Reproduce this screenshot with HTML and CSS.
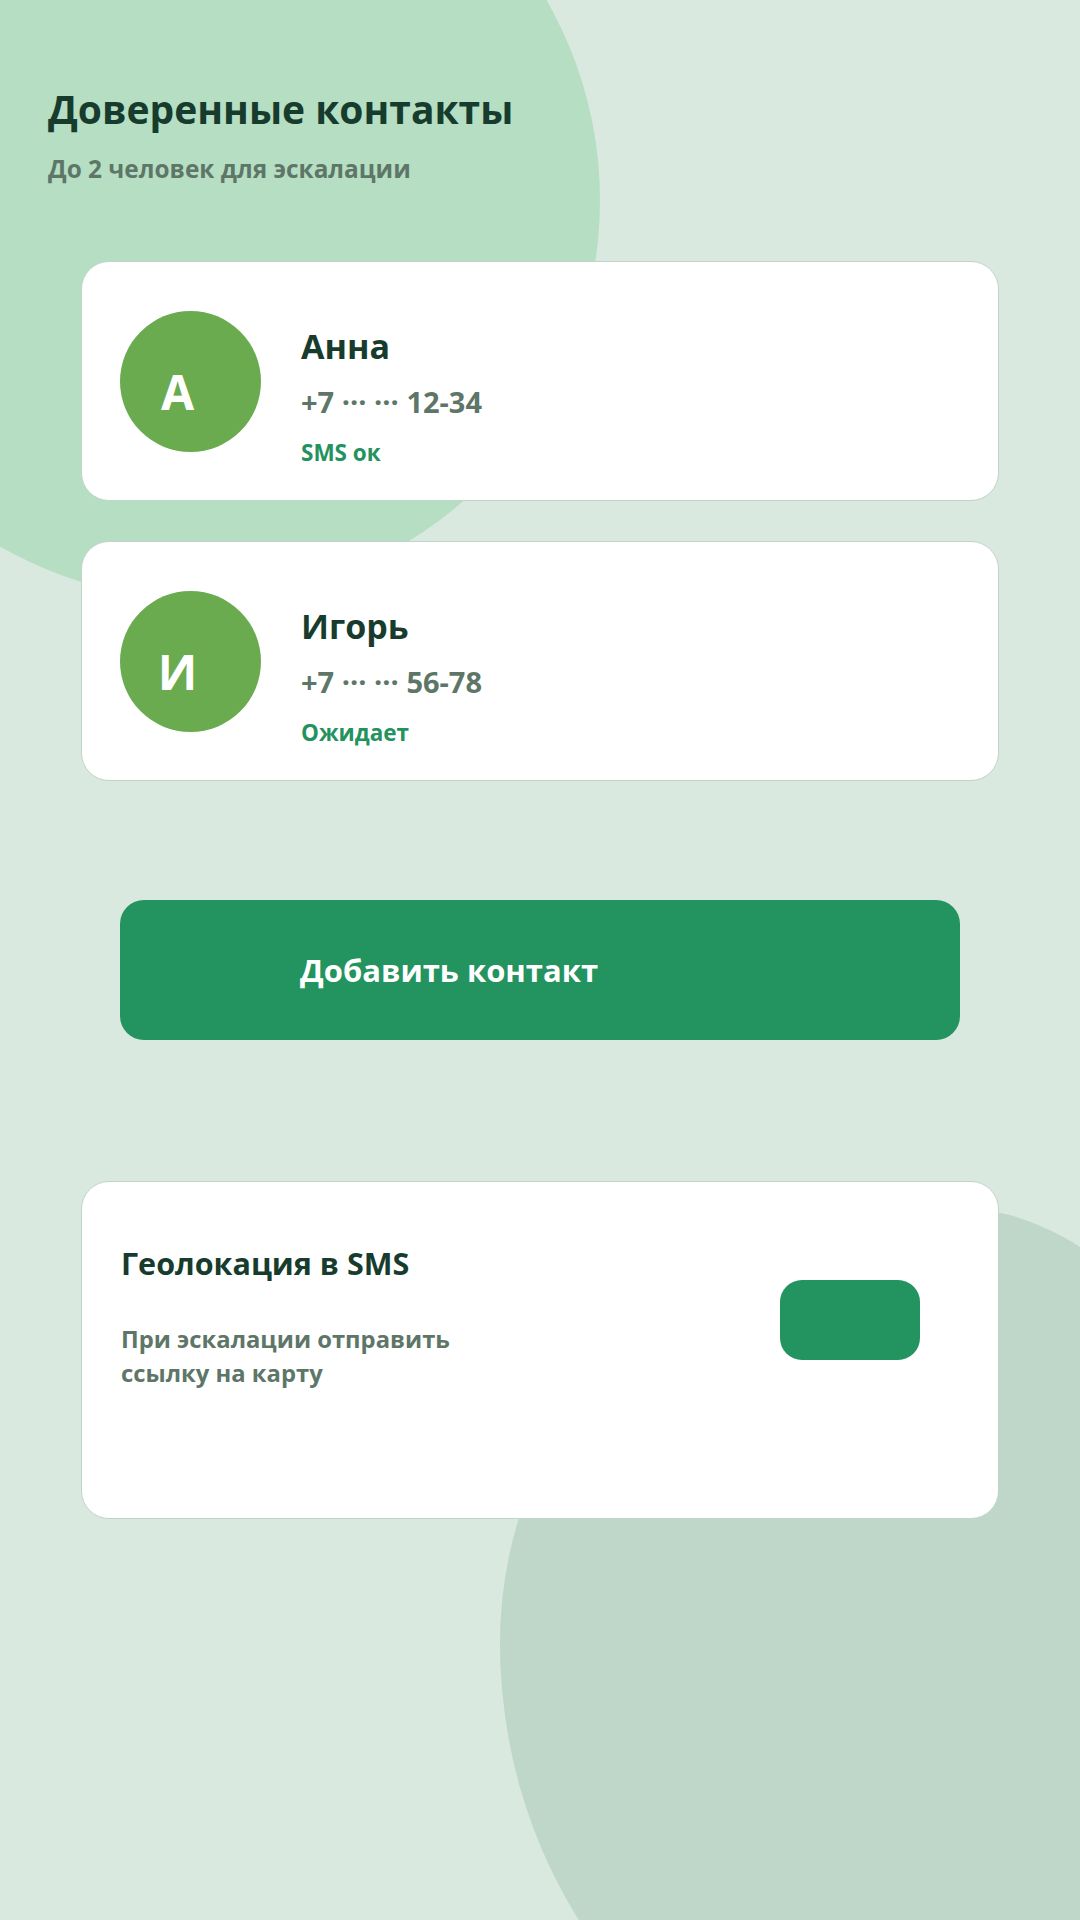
FILE: index.html
```html
<!DOCTYPE html>
<html lang="ru">
<head>
<meta charset="utf-8">
<title>Доверенные контакты</title>
<link rel="stylesheet" href="styles.css">
</head>
<body>
<div class="screen">
  <div class="blob blob-top"></div>
  <div class="blob blob-bottom"></div>
  <main class="content">
    <header class="header">
      <h1 class="title">Доверенные контакты</h1>
      <p class="subtitle">До 2 человек для эскалации</p>
    </header>
    <section class="contacts">
      <div class="card contact">
        <div class="avatar">А</div>
        <div class="info">
          <div class="name">Анна</div>
          <div class="phone">+7 ··· ··· 12-34</div>
          <div class="status">SMS ок</div>
        </div>
      </div>
      <div class="card contact">
        <div class="avatar">И</div>
        <div class="info">
          <div class="name">Игорь</div>
          <div class="phone">+7 ··· ··· 56-78</div>
          <div class="status">Ожидает</div>
        </div>
      </div>
    </section>
    <button class="add-btn" type="button">Добавить контакт</button>
    <section class="card geo">
      <div class="geo-text">
        <div class="geo-title">Геолокация в SMS</div>
        <div class="geo-desc">При эскалации отправить ссылку на карту</div>
      </div>
      <div class="toggle"></div>
    </section>
  </main>
</div>
</body>
</html>
```

FILE: styles.css
```css
html, body {
  margin: 0;
  padding: 0;
}
body {
  width: 1080px;
  height: 1920px;
  overflow: hidden;
  background: #d9e9df;
  font-family: "Open Sans", "Noto Sans", "DejaVu Sans", sans-serif;
}
.screen {
  position: relative;
  width: 1080px;
  height: 1920px;
  overflow: hidden;
}
.blob {
  position: absolute;
}
.blob-top {
  left: -200px;
  top: -200px;
  width: 800px;
  height: 800px;
  border-radius: 50%;
  background: #b5dec3;
}
.blob-bottom {
  left: 500px;
  top: 1207px;
  width: 750px;
  height: 926px;
  border-radius: 450px 300px 300px 450px / 436px 405px 521px 490px;
  background: #bed7c9;
}
.content {
  position: relative;
  z-index: 1;
  display: flex;
  flex-direction: column;
}
.header {
  padding: 81px 48px 0;
}
.title {
  margin: 0;
  font-size: 39px;
  line-height: 56px;
  font-weight: 700;
  color: #173c2d;
}
.subtitle {
  margin: 16px 0 0;
  font-size: 24.4px;
  line-height: 32px;
  font-weight: 700;
  color: #5e7668;
}
.contacts {
  margin-top: 76px;
  display: flex;
  flex-direction: column;
  align-items: center;
  gap: 40px;
}
.card {
  box-sizing: border-box;
  width: 918px;
  background: #ffffff;
  border: 1px solid #c0d4c8;
  border-radius: 28px;
}
.contact {
  height: 240px;
  padding: 49px 38px;
  display: flex;
  align-items: flex-start;
  gap: 40px;
}
.avatar {
  box-sizing: border-box;
  flex: none;
  width: 141px;
  height: 141px;
  border-radius: 50%;
  background: #6aab50;
  color: #ffffff;
  font-size: 48px;
  font-weight: 700;
  display: flex;
  align-items: center;
  justify-content: center;
  padding: 20px 26px 0 0;
}
.info {
  margin-top: 11px;
  display: flex;
  flex-direction: column;
}
.name {
  font-size: 34px;
  line-height: 48px;
  font-weight: 700;
  color: #173c2d;
}
.phone {
  margin-top: 12px;
  font-size: 29px;
  line-height: 40px;
  font-weight: 700;
  color: #5e7668;
}
.status {
  margin-top: 16px;
  font-size: 22.5px;
  line-height: 30px;
  font-weight: 700;
  color: #23925f;
}
.add-btn {
  align-self: center;
  margin-top: 119px;
  width: 840px;
  height: 140px;
  border: none;
  border-radius: 24px;
  background: #23935f;
  color: #ffffff;
  font-family: "Open Sans", "Noto Sans", "DejaVu Sans", sans-serif;
  font-size: 31px;
  font-weight: 700;
  text-align: left;
  padding: 0 0 0 180px;
}
.geo {
  align-self: center;
  margin-top: 141px;
  height: 338px;
  padding: 61px 78px 0 39px;
  display: flex;
  justify-content: space-between;
  align-items: flex-start;
}
.geo-text {
  display: flex;
  flex-direction: column;
  max-width: 380px;
}
.geo-title {
  font-size: 30.5px;
  line-height: 40px;
  font-weight: 700;
  color: #173c2d;
}
.geo-desc {
  margin-top: 39px;
  font-size: 23.8px;
  line-height: 34px;
  font-weight: 700;
  color: #5e7668;
}
.toggle {
  flex: none;
  margin-top: 37px;
  width: 140px;
  height: 80px;
  border-radius: 22px;
  background: #23935f;
}
```
